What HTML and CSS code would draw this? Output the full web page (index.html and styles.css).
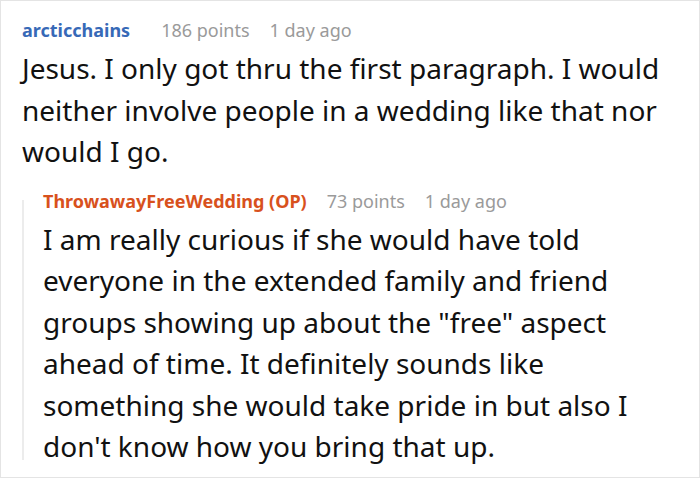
FILE: index.html
```html
<!DOCTYPE html>
<html>
<head>
    <title>Comments</title>
    <link rel="stylesheet" href="styles.css">
</head>
<body>
    <div class="frame">
        <div class="comment top">
            <div class="meta">
                <span class="author">arcticchains</span>
                <span class="score">186 points</span>
                <span class="age">1 day ago</span>
            </div>
            <p class="text">Jesus. I only got thru the first paragraph. I would neither involve people in a wedding like that nor would I go.</p>

            <div class="comment child">
                <div class="meta">
                    <span class="author op">ThrowawayFreeWedding (OP)</span>
                    <span class="score">73 points</span>
                    <span class="age">1 day ago</span>
                </div>
                <p class="text">I am really curious if she would have told everyone in the extended family and friend groups showing up about the "free" aspect ahead of time. It definitely sounds like something she would take pride in but also I don't know how you bring that up.</p>
            </div>
        </div>
    </div>
</body>
</html>
```

FILE: styles.css
```css
html, body {
    margin: 0;
    height: 100%;
    background-color: #fff;
    font-family: "Noto Sans", "Open Sans", sans-serif;
}

.frame {
    box-sizing: border-box;
    height: 478px;
    border: 1px solid #e4e4e4;
    overflow: hidden;
}

.comment {
    padding: 17px 20px 0 21px;
}

.meta {
    display: flex;
    gap: 20px;
    font-size: 18px;
    line-height: 24px;
    color: #9a9a9a;
}

.author {
    font-weight: bold;
    color: #3769b7;
}

.top > .meta .author {
    margin-right: 11px;
}

.author.op {
    color: #d8511d;
}

.text {
    margin: 6px 0 0;
    font-size: 28px;
    line-height: 41.5px;
    color: #111;
}

/* reply, with its thread line on the left */
.child {
    position: relative;
    margin-top: 16px;
    padding: 0 10px 0 21px;
}

.child::before {
    content: '';
    position: absolute;
    left: 0;
    top: 11px;
    bottom: 8px;
    border-left: 2px solid #ececec;
}
```
